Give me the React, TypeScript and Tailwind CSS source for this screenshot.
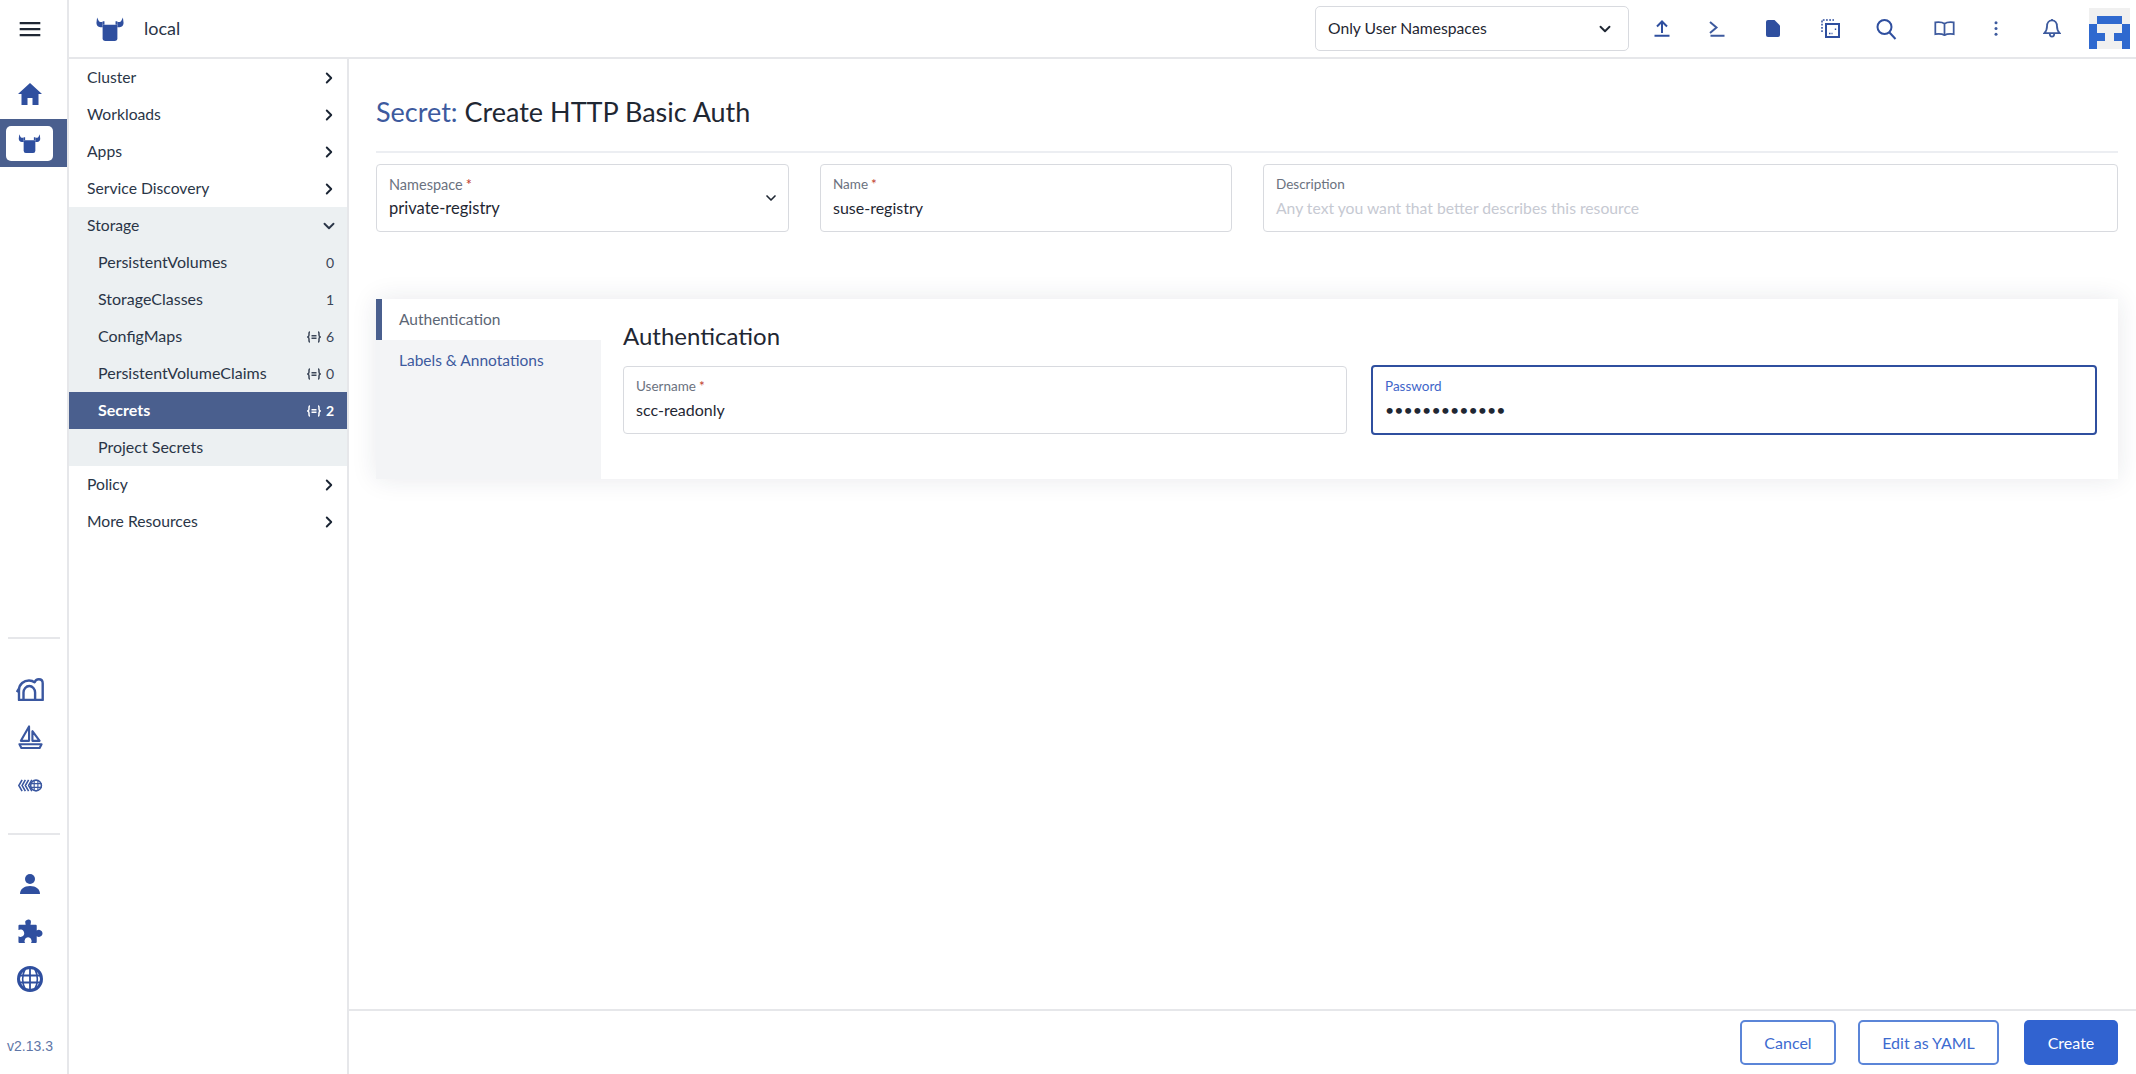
import { ChevronDown, ChevronRight } from "lucide-react";

const font = "font-['Lato','Noto_Sans',sans-serif]";

function Steer({ className }: { className?: string }) {
  return (
    <svg viewBox="0 0 30 26" className={className} fill="currentColor">
      <path d="M8.500 8.500h13a1.500 1.500 0 0 1 1.500 1.500v13a3 3 0 0 1-3 3h-10a3 3 0 0 1-3-3V10a1.500 1.500 0 0 1 1.500-1.500z" />
      <path d="M1 0.500l1.600 3.400c.3.900 1 1.400 2 1.400H7v5.700H4.500C2 11 .3 9 .3 6.500z" />
      <path d="M29 0.500l-1.600 3.400c-.3.900-1 1.400-2 1.400H23v5.700h2.500c2.500 0 4.200-2 4.200-4.500z" />
      <path d="M7 4.500h2v4H7zM21 4.500h2v4h-2z" />
    </svg>
  );
}

function NamespacedIcon({ className }: { className?: string }) {
  return (
    <svg viewBox="0 0 14 12" className={className} fill="none" stroke="currentColor" strokeWidth="1.500">
      <path d="M3 1C1.800 1 2 2.500 2 4S1.800 5.500.8 6C1.800 6.500 2 6.500 2 8s-.2 3 1 3M11 1c1.200 0 1 1.500 1 3s.2 1.500 1.200 2C12.200 6.500 12 6.500 12 8s.2 3-1 3" />
      <path d="M4.500 4.800h5M4.500 7.200h5" />
    </svg>
  );
}

const topIcons = [
  // upload
  <svg key="u" viewBox="0 0 16 17" className="h-[17px] w-[16px]" fill="none" stroke="#2f4f9f" strokeWidth="2">
    <path d="M8 13V2M3 6.500L8 1.500l5 5M.5 15.800h15" />
  </svg>,
  // kubectl shell
  <svg key="s" viewBox="0 0 16 16" className="h-[16px] w-[16px]" fill="none" stroke="#3d5a9e" strokeWidth="2">
    <path d="M1 1l6.500 5.500L1 12M1.500 14.800h14" />
  </svg>,
  // kubeconfig
  <svg key="d" viewBox="0 0 14 17" className="h-[17px] w-[14px]" fill="#2f4f9f">
    <path d="M2 0h6.500L14 5.500V15a2 2 0 0 1-2 2H2a2 2 0 0 1-2-2V2a2 2 0 0 1 2-2z" />
  </svg>,
  // copy kubeconfig
  <svg key="c" viewBox="0 0 19 19" className="h-[19px] w-[19px]" fill="none" stroke="#2f4f9f">
    <path d="M1 13V1h12" strokeWidth="1.500" strokeDasharray="1.800 1.400" />
    <rect x="5" y="5" width="13" height="13" strokeWidth="2" />
    <path d="M8 14.500h3.500M14.500 9.500v2" strokeWidth="1.400" strokeDasharray="1.500 1" />
  </svg>,
  // search
  <svg key="f" viewBox="0 0 22 22" className="h-[22px] w-[22px]" fill="none" stroke="#2f4f9f" strokeWidth="2">
    <circle cx="9.500" cy="9" r="7" />
    <path d="M14.500 14.500l6 6.500" />
  </svg>,
  // docs
  <svg key="b" viewBox="0 0 24 17" className="h-[15px] w-[21px]" fill="none" stroke="#3d5a9e" strokeWidth="2">
    <path d="M12 3C10 1.500 6 1 1.500 1.500V15c4.500-.5 8.500 0 10.500 1.200C14 15 18 14.500 22.500 15V1.500C18 1 14 1.500 12 3zM12 3v13" />
  </svg>,
  // overflow menu
  <svg key="m" viewBox="0 0 4 15" className="h-[15px] w-[4px]" fill="#3d5a9e">
    <circle cx="2" cy="1.800" r="1.500" />
    <circle cx="2" cy="7.500" r="1.500" />
    <circle cx="2" cy="13.200" r="1.500" />
  </svg>,
  // notifications
  <svg key="n" viewBox="0 0 20 23" className="h-[21px] w-[18px]" fill="none" stroke="#3d5a9e" strokeWidth="2">
    <path d="M10 2.500c-3.500 0-5.500 2.800-5.500 6.200 0 4-1 6-3 8h17c-2-2-3-4-3-8 0-3.400-2-6.200-5.500-6.200zM10 1v1.500M7.500 17c0 2 1 3.500 2.500 3.500s2.500-1.500 2.500-3.500" />
  </svg>,
];

// cell widths put each icon under its spot in the toolbar
const topCells = ["w-[54px]", "w-[55px]", "w-[58px]", "w-[56px]", "w-[56px]", "w-[60px]", "w-[44px]", "w-[68px]"];

function Avatar() {
  return (
    <svg viewBox="0 0 5 5" className="h-[41px] w-[41px] shrink-0" shapeRendering="crispEdges">
      <rect width="5" height="5" fill="#f0f0f0" />
      <path fill="#2f69cf" d="M1 1h3v1H1zM0 2h1v3H0zM4 2h1v3H4zM1 3h1v1H1zM3 3h1v1H3z" />
    </svg>
  );
}

function NavRow({ label, open }: { label: string; open?: boolean }) {
  return (
    <div className={`flex h-[37px] items-center justify-between pl-[18px] pr-[9px] text-[15.700px] text-[#2a3547] ${open ? "bg-[#ecf0f2]" : ""}`}>
      <span>{label}</span>
      {open ? (
        <ChevronDown className="h-[18px] w-[18px] text-[#2a3547]" strokeWidth={2.500} />
      ) : (
        <ChevronRight className="h-[18px] w-[18px] text-[#1a2433]" strokeWidth={2.500} />
      )}
    </div>
  );
}

function SubRow({ label, count, ns, active }: { label: string; count?: number; ns?: boolean; active?: boolean }) {
  return (
    <div
      className={`flex h-[37px] items-center justify-between pl-[29px] pr-[13px] text-[16px] ${
        active ? "bg-[#4a5f8e] font-bold text-white" : "bg-[#ecf0f2] text-[#2a3547]"
      }`}
    >
      <span className="-translate-y-px">{label}</span>
      {count !== undefined && (
        <span className={`flex items-center gap-[5px] text-[14px] ${active ? "text-white" : "text-[#3b4658]"}`}>
          {ns && <NamespacedIcon className="h-[12px] w-[14px]" />}
          {count}
        </span>
      )}
    </div>
  );
}

function Field({
  label,
  required,
  value,
  placeholder,
  className,
  focused,
  big,
}: {
  label: string;
  required?: boolean;
  value?: string;
  placeholder?: string;
  className?: string;
  focused?: boolean;
  big?: boolean;
}) {
  return (
    <div
      className={`flex flex-col rounded-[4px] bg-white ${big ? "pl-[12px] pt-[10px]" : "pl-[12px] pt-[9px]"} ${
        focused ? "border-2 border-[#2f4f9f]" : "border border-[#d8dadf]"
      } ${className ?? ""}`}
    >
      <div className={`${big ? "text-[14.500px]" : "text-[13.500px]"} leading-[20px] ${focused ? "text-[#3f66c9]" : "text-[#6b7280]"}`}>
        {label}
        {required && <span className="ml-[3px] text-[#c0392b]">*</span>}
      </div>
      {placeholder ? (
        <div className="mt-[4px] text-[15.700px] leading-[20px] text-[#c6c9d2]">{placeholder}</div>
      ) : (
        <div className={`${big ? "mt-[3px] text-[16.500px]" : "mt-[4px] text-[16px]"} leading-[20px] text-[#1f2733]`}>{value}</div>
      )}
    </div>
  );
}

export default function App() {
  return (
    <div className={`flex h-screen w-full flex-col overflow-hidden bg-white ${font}`}>
      <div className="flex min-h-0 flex-1">
        {/* rail */}
        <aside className="flex w-[69px] shrink-0 flex-col items-stretch border-r-2 border-[#e6e7ea]">
          <div className="flex h-[59px] items-center justify-center pr-[7px]">
            <svg viewBox="0 0 22 16" className="h-[15px] w-[22px]" fill="#1f2733">
              <rect y="0" width="22" height="2.400" />
              <rect y="6.400" width="22" height="2.400" />
              <rect y="12.800" width="22" height="2.400" />
            </svg>
          </div>
          <div className="flex h-[60px] items-center justify-center pr-[7px] pt-[10px]">
            <svg viewBox="0 0 24 22" className="h-[22px] w-[24px]" fill="#2f4f9f">
              <path d="M12 0L0 11h3.500v11h6v-7h5v7h6V11H24z" />
            </svg>
          </div>
          <div className="flex h-[48px] items-center bg-[#4a5f8e] pl-[6px]">
            <div className="flex h-[35px] w-[47px] items-center justify-center rounded-[5px] bg-white">
              <Steer className="h-[19px] w-[23px] text-[#2f4f9f]" />
            </div>
          </div>
          <div className="mt-[470px] mr-[7px] ml-[8px] h-[2px] bg-[#e6e7ea]" />
          <div className="flex h-[48px] mt-[26px] items-center justify-center pr-[7px]">
            <svg viewBox="0 0 28 23" className="h-[23px] w-[28px]" fill="none" stroke="#3a57a0" strokeWidth="2.400" strokeLinejoin="round">
              <path d="M3 22V12C3 6 8 2.500 13 2.500c2.200 0 4.200.6 5.600 1.800C19.300 2.300 20.800 1.200 22.800 1.200c2.300 0 3.900 1.600 3.900 4V22zM.8 14C1.800 12.500 2.500 11.500 3 10.500" />
              <path d="M7.500 22V14.500c0-3.500 2.600-6.500 5.800-6.500s5.800 3 5.800 6.500V22" />
            </svg>
          </div>
          <div className="flex h-[48px] items-center justify-center pr-[7px]">
            <svg viewBox="0 0 26 26" className="h-[26px] w-[25px]" fill="none" stroke="#3a57a0" strokeWidth="2.200" strokeLinejoin="round">
              <path d="M11.500 2v15H3zM15 7v10h7.500zM1.500 20.500h23l-2 4H3.500z" />
            </svg>
          </div>
          <div className="flex h-[48px] items-center justify-center pr-[7px]">
            <svg viewBox="0 0 26 14" className="h-[13px] w-[26px]" fill="none" stroke="#3a57a0" strokeWidth="1.700">
              <path d="M4.500 1L1 7l3.500 6M8 1L4.500 7 8 13M11.500 1L8 7l3.500 6M15 1l-3.500 6 3.500 6" />
              <circle cx="19.500" cy="7" r="5.800" />
              <path d="M13.500 5h12M13.500 9h12M17.500 1.500v11M21.500 1.500v11" strokeWidth="1.200" />
            </svg>
          </div>
          <div className="mt-[24px] mr-[7px] ml-[8px] h-[2px] bg-[#e6e7ea]" />
          <div className="mt-[25px] flex h-[48px] items-center justify-center pr-[7px]">
            <svg viewBox="0 0 20 20" className="h-[20px] w-[20px]" fill="#2f4f9f">
              <circle cx="10" cy="5" r="5" />
              <path d="M0 20c0-5 4-8 10-8s10 3 10 8z" />
            </svg>
          </div>
          <div className="-mt-px flex h-[48px] items-center justify-center pr-[7px]">
            <svg viewBox="0 0 26 26" className="h-[25px] w-[26px]" fill="#2f4f9f">
              <path d="M10 1c2-1 4 0 4 2 0 1-.5 2-.5 3H19a1 1 0 0 1 1 1v5c1-.5 2-1 3-.5 2 .5 3 2 3 3.500s-1 3-3 3.500c-1 .5-2 0-3-.5v6a1 1 0 0 1-1 1h-5c.5-1 1-2 .5-3-.5-2-2-3-3.500-3s-3 1-3.500 3c-.5 1 0 2 .5 3H2a1 1 0 0 1-1-1v-6c1 .5 2 1 3 .5 2-.5 3-2 3-3.500S6 11.500 4 11c-1-.5-2 0-3 .5V7a1 1 0 0 1 1-1h6.500C8.500 5 8 4 8 3c0-1 .8-1.600 2-2z" />
            </svg>
          </div>
          <div className="flex h-[48px] items-center justify-center pr-[7px]">
            <svg viewBox="0 0 26 26" className="h-[26px] w-[26px]" fill="none" stroke="#2f4f9f">
              <circle cx="13" cy="13" r="11.500" strokeWidth="3" />
              <path d="M2 9.500h22M2 16.500h22M13 2v22M8 3c-3 6-3 14 0 20M18 3c3 6 3 14 0 20" strokeWidth="1.800" />
            </svg>
          </div>
          <div className="mt-[34px] pr-[7px] text-center font-['Liberation_Sans',sans-serif] text-[14px] leading-[18px] text-[#5f77a8]">v2.13.3</div>
        </aside>

        <div className="flex min-w-0 flex-1 flex-col">
          {/* header */}
          <header className="flex h-[59px] shrink-0 items-center border-b-2 border-[#e6e7ea] pl-[27px]">
            <Steer className="h-[24px] w-[28px] text-[#2f4f9f]" />
            <span className="ml-[20px] text-[18px] text-[#2a3547]">local</span>
            <div className="ml-auto flex h-[45px] w-[314px] items-center justify-between rounded-[5px] border border-[#d8dadf] pl-[12px] pr-[14px] text-[15.700px] text-[#1f2733]">
              <span>Only User Namespaces</span>
              <ChevronDown className="h-[18px] w-[18px]" strokeWidth={2.500} />
            </div>
            <div className="ml-[6px] flex items-center">
              {topIcons.map((icon, i) => (
                <div key={i} className={`flex h-[56px] items-center justify-center ${topCells[i]}`}>
                  {icon}
                </div>
              ))}
            </div>
            <div className="ml-[3px] mr-[6px]">
              <Avatar />
            </div>
          </header>

          <div className="flex min-h-0 flex-1">
            {/* side nav */}
            <nav className="w-[280px] shrink-0 border-r-2 border-[#e6e7ea]">
              <NavRow label="Cluster" />
              <NavRow label="Workloads" />
              <NavRow label="Apps" />
              <NavRow label="Service Discovery" />
              <NavRow label="Storage" open />
              <SubRow label="PersistentVolumes" count={0} />
              <SubRow label="StorageClasses" count={1} />
              <SubRow label="ConfigMaps" count={6} ns />
              <SubRow label="PersistentVolumeClaims" count={0} ns />
              <SubRow label="Secrets" count={2} ns active />
              <SubRow label="Project Secrets" />
              <NavRow label="Policy" />
              <NavRow label="More Resources" />
            </nav>

            {/* main */}
            <main className="flex min-w-0 flex-1 flex-col">
              <div className="min-h-0 flex-1 pl-[27px] pr-[18px]">
                <div className="flex h-[94px] items-center border-b-2 border-[#eceef2] pt-[14px]">
                  <h1 className="text-[27px] text-[#1f2733]">
                    <span className="text-[#3d5a9e]">Secret:</span> Create HTTP Basic Auth
                  </h1>
                </div>

                <div className="mt-[11px] flex gap-[31px]">
                  <div className="relative h-[68px] w-[413px] shrink-0">
                    <Field label="Namespace" required value="private-registry" className="h-full" big />
                    <ChevronDown className="absolute right-[10px] top-[26px] h-[16px] w-[16px] text-[#1f2733]" strokeWidth={2.500} />
                  </div>
                  <Field label="Name" required value="suse-registry" className="h-[68px] w-[412px] shrink-0" />
                  <Field label="Description" placeholder="Any text you want that better describes this resource" className="h-[68px] flex-1" />
                </div>

                <div className="mt-[67px] flex h-[180px] bg-white shadow-[0_0_24px_rgba(30,40,70,0.10)]">
                  <div className="w-[225px] shrink-0 bg-[#f3f4f6]">
                    <div className="flex h-[41px] items-center border-l-[6px] border-[#4a5f8e] bg-white pl-[17px] text-[15.500px] text-[#5c6675]">
                      Authentication
                    </div>
                    <div className="flex h-[41px] items-center pl-[23px] text-[15.500px] text-[#3d5a9e]">Labels &amp; Annotations</div>
                  </div>
                  <div className="flex-1 pl-[22px] pr-[21px] pt-[21px]">
                    <h2 className="text-[24px] leading-[32px] text-[#1f2733]">Authentication</h2>
                    <div className="mt-[14px] flex gap-[24px]">
                      <Field label="Username" required value="scc-readonly" className="h-[68px] flex-1" />
                      <Field label="Password" value="•••••••••••••" focused className="-mt-px h-[70px] flex-1" />
                    </div>
                  </div>
                </div>
              </div>

              {/* footer */}
              <footer className="flex h-[65px] shrink-0 items-center justify-end gap-[22px] border-t-2 border-[#e6e7ea] pr-[18px]">
                <button className="h-[45px] w-[96px] rounded-[5px] border-2 border-[#5b85d8] text-[16px] text-[#3d6bd0]">Cancel</button>
                <button className="mr-[3px] h-[45px] w-[141px] rounded-[5px] border-2 border-[#5b85d8] text-[16px] text-[#3d6bd0]">Edit as YAML</button>
                <button className="h-[45px] w-[94px] rounded-[5px] bg-[#3163d0] text-[16px] text-white">Create</button>
              </footer>
            </main>
          </div>
        </div>
      </div>
    </div>
  );
}
